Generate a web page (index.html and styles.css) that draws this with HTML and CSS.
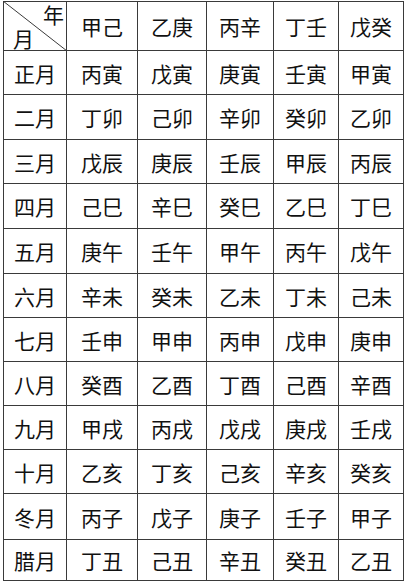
FILE: index.html
```html
<!DOCTYPE html>
<html lang="zh">
<head>
<meta charset="utf-8">
<link rel="stylesheet" href="styles.css">
</head>
<body>
<div class="grid">
  <div class="cell corner">
    <svg class="diag" viewBox="0 0 100 100" preserveAspectRatio="none"><line x1="0" y1="0" x2="100" y2="100" vector-effect="non-scaling-stroke"/></svg>
    <span class="nian">年</span>
    <span class="yue">月</span>
  </div>
  <div class="cell">甲己</div><div class="cell">乙庚</div><div class="cell">丙辛</div><div class="cell">丁壬</div><div class="cell">戊癸</div>
  <div class="cell">正月</div><div class="cell">丙寅</div><div class="cell">戊寅</div><div class="cell">庚寅</div><div class="cell">壬寅</div><div class="cell">甲寅</div>
  <div class="cell">二月</div><div class="cell">丁卯</div><div class="cell">己卯</div><div class="cell">辛卯</div><div class="cell">癸卯</div><div class="cell">乙卯</div>
  <div class="cell">三月</div><div class="cell">戊辰</div><div class="cell">庚辰</div><div class="cell">壬辰</div><div class="cell">甲辰</div><div class="cell">丙辰</div>
  <div class="cell">四月</div><div class="cell">己巳</div><div class="cell">辛巳</div><div class="cell">癸巳</div><div class="cell">乙巳</div><div class="cell">丁巳</div>
  <div class="cell">五月</div><div class="cell">庚午</div><div class="cell">壬午</div><div class="cell">甲午</div><div class="cell">丙午</div><div class="cell">戊午</div>
  <div class="cell">六月</div><div class="cell">辛未</div><div class="cell">癸未</div><div class="cell">乙未</div><div class="cell">丁未</div><div class="cell">己未</div>
  <div class="cell">七月</div><div class="cell">壬申</div><div class="cell">甲申</div><div class="cell">丙申</div><div class="cell">戊申</div><div class="cell">庚申</div>
  <div class="cell">八月</div><div class="cell">癸酉</div><div class="cell">乙酉</div><div class="cell">丁酉</div><div class="cell">己酉</div><div class="cell">辛酉</div>
  <div class="cell">九月</div><div class="cell">甲戌</div><div class="cell">丙戌</div><div class="cell">戊戌</div><div class="cell">庚戌</div><div class="cell">壬戌</div>
  <div class="cell">十月</div><div class="cell">乙亥</div><div class="cell">丁亥</div><div class="cell">己亥</div><div class="cell">辛亥</div><div class="cell">癸亥</div>
  <div class="cell">冬月</div><div class="cell">丙子</div><div class="cell">戊子</div><div class="cell">庚子</div><div class="cell">壬子</div><div class="cell">甲子</div>
  <div class="cell">腊月</div><div class="cell">丁丑</div><div class="cell">己丑</div><div class="cell">辛丑</div><div class="cell">癸丑</div><div class="cell">乙丑</div>
</div>
</body>
</html>
```
FILE: styles.css
```css
html, body {
  margin: 0;
  padding: 0;
  background: #ffffff;
}
body {
  font-family: "Noto Sans CJK SC", "Noto Sans", sans-serif;
  color: #111111;
}
.grid {
  margin: 1px 0 0 3px;
  width: 401px;
  display: grid;
  grid-template-columns: 62px 70px 68px 66px 64px 64px;
  grid-template-rows: 48px 43px 44px 43px 44px 44px 43px 43px 43px 43px 43px 45px 40px;
  gap: 1px;
  padding: 1px;
  box-sizing: border-box;
  background: #3a3a3a;
}
.cell {
  background: #ffffff;
  display: flex;
  align-items: center;
  justify-content: center;
  font-size: 21px;
  line-height: 22px;
}
.corner {
  position: relative;
  flex-direction: column;
  align-items: stretch;
  justify-content: space-between;
  padding: 1px 2px 1px 9px;
}
.diag {
  position: absolute;
  left: -1px;
  top: -1px;
  width: calc(100% + 2px);
  height: calc(100% + 2px);
}
.diag line {
  stroke: #3a3a3a;
  stroke-width: 1;
}
.nian {
  align-self: flex-end;
  position: relative;
}
.yue {
  align-self: flex-start;
  position: relative;
}
```
